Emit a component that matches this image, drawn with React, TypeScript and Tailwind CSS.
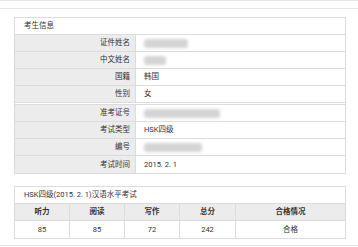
import React from 'react';

const font = { fontFamily: 'Roboto, "Noto Sans CJK SC", sans-serif' };

const Blur: React.FC<{ w: string }> = ({ w }) => (
  <span className={`inline-block h-[9px] ${w} rounded-[3px] bg-[#d4d4d4] blur-[1.5px]`} />
);

const InfoRow: React.FC<{ label: string; value: React.ReactNode; last?: boolean }> = ({ label, value, last }) => (
  <div className={`grid grid-cols-[121px_1fr] h-[17px] ${last ? '' : 'border-b border-[#dcdcdc]'}`}>
    <div className="bg-[#ececec] border-r border-[#dcdcdc] flex items-center justify-end pr-[5px]">{label}</div>
    <div className="flex items-center pl-[8px]">{value}</div>
  </div>
);

export default function App() {
  const scores = [
    { label: '听力', value: '85' },
    { label: '阅读', value: '85' },
    { label: '写作', value: '72' },
    { label: '总分', value: '242' },
    { label: '合格情况', value: '合格' },
  ];

  return (
    <div className="w-[358px] h-[247px] bg-white text-[#333] text-[7.5px] leading-none overflow-hidden" style={font}>
      <div className="h-[9px] border-t border-b border-[#e4e4e4]" />

      <div className="px-[14px] pt-[8px]">
        {/* 考生信息 */}
        <div className="w-[332px] border border-[#dcdcdc]">
          <div className="h-[17px] flex items-center pl-[9px] border-b border-[#dcdcdc]">考生信息</div>
          <InfoRow label="证件姓名" value={<Blur w="w-[44px]" />} />
          <InfoRow label="中文姓名" value={<Blur w="w-[22px]" />} />
          <InfoRow label="国籍" value="韩国" />
          <InfoRow label="性别" value="女" />
          <div className="h-[2px] border-b border-[#dcdcdc]" />
          <InfoRow label="准考证号" value={<Blur w="w-[76px]" />} />
          <InfoRow label="考试类型" value="HSK四级" />
          <InfoRow label="编号" value={<Blur w="w-[58px]" />} />
          <InfoRow label="考试时间" value="2015. 2. 1" last />
        </div>

        {/* 成绩 */}
        <div className="w-[332px] mt-[12px] border border-[#dcdcdc]">
          <div className="h-[17px] flex items-center pl-[9px] border-b border-[#dcdcdc]">HSK四级(2015. 2. 1)汉语水平考试</div>
          <div className="grid grid-cols-[55px_55px_55px_56px_1fr] h-[17px] bg-[#ececec] border-b border-[#dcdcdc] font-bold">
            {scores.map((s, i) => (
              <div key={s.label} className={`flex items-center justify-center ${i < 4 ? 'border-r border-[#dcdcdc]' : ''}`}>{s.label}</div>
            ))}
          </div>
          <div className="grid grid-cols-[55px_55px_55px_56px_1fr] h-[17px]">
            {scores.map((s, i) => (
              <div key={s.label} className={`flex items-center justify-center ${i < 4 ? 'border-r border-[#dcdcdc]' : ''}`}>{s.value}</div>
            ))}
          </div>
        </div>
      </div>

      <div className="mt-[6px] border-t border-[#e4e4e4]" />
    </div>
  );
}
